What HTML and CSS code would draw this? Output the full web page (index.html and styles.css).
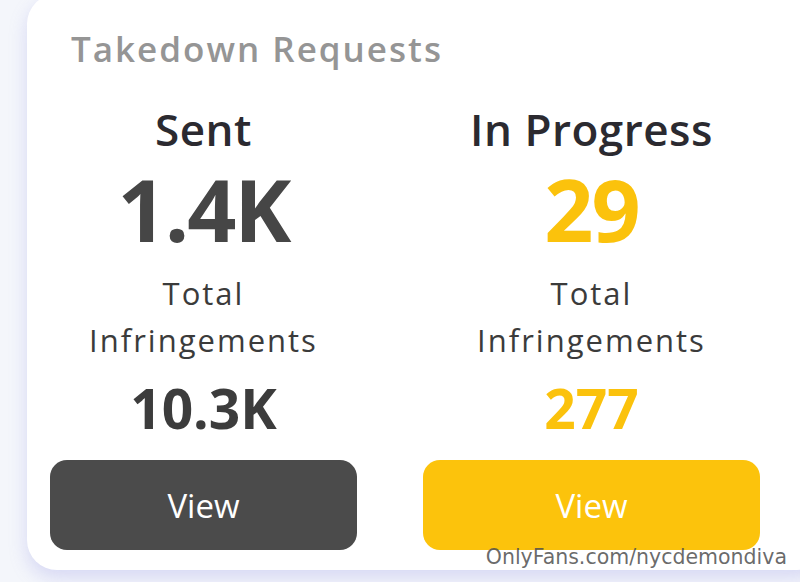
FILE: index.html
```html
<!DOCTYPE html>
<html lang="en">
<head>
  <meta charset="UTF-8">
  <meta name="viewport" content="width=device-width, initial-scale=1.0">
  <title>Takedown Requests</title>
  <link rel="stylesheet" href="styles.css">
</head>
<body>
  <div class="page">
    <!-- Takedown summary card -->
    <div class="card">
      <h2 class="card-title">Takedown Requests</h2>

      <div class="columns">
        <div class="col">
          <div class="label">Sent</div>
          <div class="big">1.4K</div>
          <div class="desc">Total<br>Infringements</div>
          <div class="sub">10.3K</div>
          <button class="view-btn dark">View</button>
        </div>

        <div class="col">
          <div class="label">In Progress</div>
          <div class="big yellow">29</div>
          <div class="desc">Total<br>Infringements</div>
          <div class="sub yellow">277</div>
          <button class="view-btn amber">View</button>
        </div>
      </div>
    </div>
  </div>

  <div class="watermark">OnlyFans.com/nycdemondiva</div>
</body>
</html>
```

FILE: styles.css
```css
/* Page */
html, body {
  margin: 0;
  height: 582px;
  overflow: hidden;
}
body {
  font-family: "Open Sans", Arial, sans-serif;
  background-color: #f4f6fb;
  position: relative;
}
.page {
  padding-left: 27px;
}

/* Card */
.card {
  margin-top: -6px;
  width: 800px;
  height: 576px;
  box-sizing: border-box;
  padding-top: 35px;
  background-color: #fff;
  border-radius: 30px;
  box-shadow: 0 8px 18px rgba(140, 140, 225, 0.28);
}
.card-title {
  margin: 0 0 0 44px;
  font-size: 35px;
  line-height: 40px;
  font-weight: 600;
  letter-spacing: 2px;
  color: #959595;
}

/* Two stat columns */
.columns {
  display: grid;
  grid-template-columns: 307px 337px;
  column-gap: 66px;
  margin: 35px 0 0 23px;
}
.col {
  display: flex;
  flex-direction: column;
  align-items: stretch;
  text-align: center;
}
.label {
  font-size: 44px;
  line-height: 50px;
  font-weight: 600;
  letter-spacing: 0.5px;
  color: #2b2a30;
}
.big {
  margin-top: 10px;
  font-size: 86px;
  line-height: 90px;
  font-weight: 700;
  letter-spacing: -2px;
  color: #464646;
}
.desc {
  margin-top: 16px;
  font-size: 31px;
  line-height: 47px;
  color: #3b3b3b;
  letter-spacing: 2px;
}
.sub {
  margin-top: 14px;
  font-size: 55px;
  line-height: 60px;
  font-weight: 700;
  color: #3c3c3c;
}
.yellow {
  color: #fbc20c;
}

/* Buttons */
.view-btn {
  margin-top: 22px;
  height: 90px;
  border: none;
  border-radius: 17px;
  font-family: "Open Sans", Arial, sans-serif;
  font-size: 33px;
  color: #fff;
  cursor: pointer;
}
.view-btn.dark {
  background-color: #4b4b4b;
}
.view-btn.amber {
  background-color: #fcc30c;
}

/* Watermark */
.watermark {
  position: absolute;
  right: 13px;
  bottom: 13px;
  font-family: "DejaVu Sans", sans-serif;
  font-size: 20.5px;
  color: rgba(80, 80, 80, 0.85);
}
```
